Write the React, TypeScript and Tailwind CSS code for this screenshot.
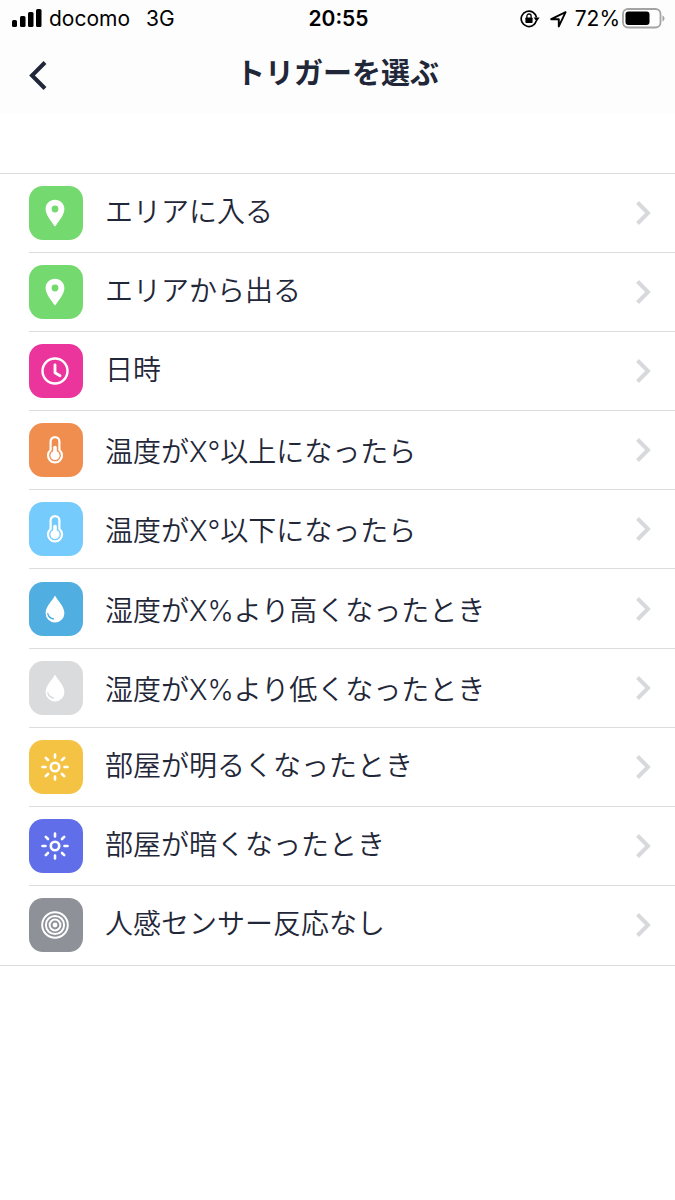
import type { ReactNode } from "react";

interface Trigger {
  label: string;
  color: string;
  icon: ReactNode;
  mixed?: boolean;
}

function Glyph({ children }: { children: ReactNode }) {
  return (
    <svg viewBox="0 0 28 28" className="mr-0.5 size-7" fill="none" stroke="currentColor" aria-hidden="true">
      {children}
    </svg>
  );
}

const pin = (
  <Glyph>
    <path
      fill="currentColor"
      stroke="none"
      fillRule="evenodd"
      d="M14 .8C8.8.8 4.6 4.9 4.6 10c0 6.6 6.6 13 8.6 16.7.4.7 1.2.7 1.6 0C16.8 23 23.4 16.6 23.4 10 23.4 4.9 19.2.8 14 .8Zm0 5.8a3.400 3.400 0 1 1 0 6.800 3.400 3.400 0 0 1 0-6.800Z"
    />
  </Glyph>
);

const clock = (
  <Glyph>
    <circle cx="14" cy="14" r="12.5" strokeWidth="2.4" />
    <path d="M14 7.800V15.800l5 3" strokeWidth="2.800" strokeLinecap="round" strokeLinejoin="round" />
  </Glyph>
);

const thermometer = (
  <Glyph>
    <path
      d="M9.600 14V5.500a4.400 4.400 0 0 1 8.800 0v8.500a7 7 0 1 1-8.800 0Z"
      strokeWidth="2.200"
      strokeLinejoin="round"
    />
    <path d="M14 11.500v8" strokeWidth="3.600" strokeLinecap="round" />
    <circle cx="14" cy="19.500" r="4.600" fill="currentColor" stroke="none" />
  </Glyph>
);

const drop = (
  <Glyph>
    <path
      fill="currentColor"
      stroke="none"
      fillRule="evenodd"
      d="M14 .5C12.400 4.500 4.600 11.200 4.600 18.200a9.400 9.400 0 0 0 18.800 0C23.400 11.200 15.600 4.500 14 .5ZM7.200 18c.6 3 2.800 4.800 5.800 5.300v1.300c-4-.2-6.800-2.800-6.800-6.600Z"
    />
  </Glyph>
);

const sun = (
  <Glyph>
    <circle cx="14" cy="14" r="4.200" strokeWidth="2.600" />
    <path
      d="M14 1.500v3M14 23.500v3M1.500 14h3M23.500 14h3M4.800 4.800l2.200 2.200M21 21l2.200 2.200M4.800 23.200 7 21M21 7l2.200-2.200"
      strokeWidth="2.600"
      strokeLinecap="round"
    />
  </Glyph>
);

const sensor = (
  <Glyph>
    <circle cx="14" cy="14" r="12.800" strokeWidth="2" />
    <circle cx="14" cy="14" r="9.100" strokeWidth="2" />
    <circle cx="14" cy="14" r="5.400" strokeWidth="2" />
    <circle cx="14" cy="14" r="2.400" fill="currentColor" stroke="none" />
  </Glyph>
);

const triggers: Trigger[] = [
  { label: "エリアに入る", color: "bg-[#74d96f]", icon: pin },
  { label: "エリアから出る", color: "bg-[#74d96f]", icon: pin },
  { label: "日時", color: "bg-[#eb349c]", icon: clock },
  { label: "温度がX°以上になったら", color: "bg-[#f08e50]", icon: thermometer, mixed: true },
  { label: "温度がX°以下になったら", color: "bg-[#75cbfb]", icon: thermometer, mixed: true },
  { label: "湿度がX%より高くなったとき", color: "bg-[#50aee1]", icon: drop, mixed: true },
  { label: "湿度がX%より低くなったとき", color: "bg-[#d9dbdd]", icon: drop, mixed: true },
  { label: "部屋が明るくなったとき", color: "bg-[#f5c344]", icon: sun },
  { label: "部屋が暗くなったとき", color: "bg-[#606fe9]", icon: sun },
  { label: "人感センサー反応なし", color: "bg-[#8e9197]", icon: sensor },
];

function StatusBar() {
  return (
    <div className="grid h-[38px] grid-cols-[1fr_auto_1fr] items-center pr-[10px] pl-3 text-[21px] leading-9 text-black">
      <div className="flex items-center">
        <svg viewBox="0 0 30 20" className="h-5 w-[30px]" fill="currentColor" aria-hidden="true">
          <rect x="0" y="11" width="5" height="7" rx="1.500" />
          <rect x="8" y="7" width="5.500" height="11" rx="1.500" />
          <rect x="16" y="3" width="5.500" height="15" rx="1.500" />
          <rect x="24" y="0" width="5.500" height="18" rx="1.500" />
        </svg>
        <span className="ml-[7px]">docomo</span>
        <span className="ml-4">3G</span>
      </div>
      <span className="font-semibold">20:55</span>
      <div className="flex items-center justify-end">
        {/* Rotation lock */}
        <svg viewBox="0 0 20 18" className="mr-[10px] h-[18px] w-5" fill="none" stroke="currentColor" aria-hidden="true">
          <path d="M13.200 15.200A7.700 7.700 0 1 1 16.500 7.500" strokeWidth="1.700" />
          <path d="M16.200 11a7.700 7.700 0 0 1-3 4.200" strokeWidth="1.700" />
          <path d="M13.600 7.500h6l-3 4.200Z" fill="currentColor" stroke="none" />
          <rect x="5.400" y="7.500" width="7.200" height="5.500" rx=".8" fill="currentColor" stroke="none" />
          <path d="M6.900 8V6.100a2.100 2.100 0 0 1 4.200 0V8" strokeWidth="1.300" />
        </svg>
        {/* Location */}
        <svg viewBox="0 0 17 17" className="mr-2 size-[17px]" fill="none" stroke="currentColor" aria-hidden="true">
          <path d="M1.200 8.200 15.600 1.200 8.800 15.400V8.200Z" strokeWidth="1.900" strokeLinejoin="round" />
        </svg>
        <span>72%</span>
        {/* Battery */}
        <svg viewBox="0 0 43 21" className="mb-0.5 ml-0.5 h-[21px] w-[43px]" fill="none" aria-hidden="true">
          <rect x="1" y="1" width="37.500" height="18.500" rx="5" stroke="#a3a3a3" strokeWidth="1.800" />
          <rect x="3.500" y="3.500" width="24" height="13.500" rx="3" fill="#000" />
          <path d="M40.500 7.500c2.600.8 2.600 5.200 0 6Z" fill="#a3a3a3" />
        </svg>
      </div>
    </div>
  );
}

function TriggerRow({ label, color, icon, mixed }: Trigger) {
  return (
    <li className="group pl-[29px]">
      <button
        type="button"
        className="flex h-full w-full items-center border-b border-[#dcdddf] pr-6 text-left group-last:border-b-0"
      >
        <span className={`flex size-[54px] shrink-0 items-center justify-center rounded-[14px] text-white ${color}`}>
          {icon}
        </span>
        <span className={`ml-[22px] flex-1 text-[28px] leading-9 font-[350] ${mixed ? "pt-1" : "pb-0.5"}`}>
          {label}
        </span>
        <svg viewBox="0 0 16 26" className="h-[26px] w-4 text-[#d7d9dc]" fill="none" stroke="currentColor" aria-hidden="true">
          <path d="M2.500 2.500 13 13 2.500 23.500" strokeWidth="4" />
        </svg>
      </button>
    </li>
  );
}

export default function App() {
  return (
    <div className="min-h-screen bg-white font-['Inter','Noto_Sans_CJK_JP',sans-serif] text-[#1f2738]">
      <header className="bg-[#fdfdfd]">
        <StatusBar />
        <div className="grid h-[75px] grid-cols-[1fr_auto_1fr] items-center">
          <button type="button" aria-label="戻る" className="ml-7 flex h-11 w-11 items-center">
            <svg viewBox="0 0 20 30" className="h-[30px] w-5" fill="none" stroke="currentColor" aria-hidden="true">
              <path d="M17 1.500 4 14.500 17 27.500" strokeWidth="4" />
            </svg>
          </button>
          <h1 className="pb-1 text-[29px] leading-9 font-bold">トリガーを選ぶ</h1>
        </div>
      </header>

      <main className="pt-[60px]">
        <ul className="grid min-h-[793px] auto-rows-fr border-y border-[#dcdddf]">
          {triggers.map((trigger) => (
            <TriggerRow key={trigger.label} {...trigger} />
          ))}
        </ul>
      </main>
    </div>
  );
}
